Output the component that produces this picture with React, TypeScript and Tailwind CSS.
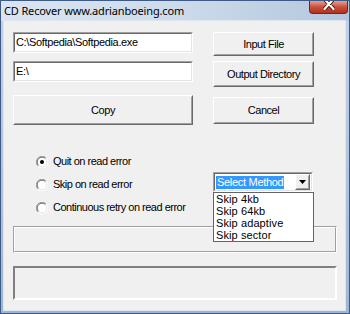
import React from "react";

const font = { fontFamily: '"Liberation Sans", Arial, sans-serif' };

function Raised({ className, children }: { className: string; children?: React.ReactNode }) {
  return (
    <div className={`border border-t-white border-l-white border-b-[#696969] border-r-[#696969] bg-[#f0f0f0] ${className}`}>
      <div className="w-full h-full border border-t-[#f0f0f0] border-l-[#f0f0f0] border-b-[#a0a0a0] border-r-[#a0a0a0] flex items-center justify-center text-[11px] tracking-[-0.45px] text-black">
        {children}
      </div>
    </div>
  );
}

function Sunken({ className, children, inner }: { className: string; children?: React.ReactNode; inner?: string }) {
  return (
    <div className={`border border-t-[#a0a0a0] border-l-[#a0a0a0] border-b-white border-r-white ${className}`}>
      <div className={`w-full h-full border border-t-[#696969] border-l-[#696969] border-b-[#e3e3e3] border-r-[#e3e3e3] ${inner ?? ""}`}>
        {children}
      </div>
    </div>
  );
}

function Radio({ checked }: { checked?: boolean }) {
  return (
    <svg width="12" height="12" viewBox="0 0 12 12" className="shrink-0">
      <circle cx="6" cy="6" r="5.5" fill="white" />
      <path d="M1.9 10.1 A5.5 5.5 0 0 1 10.1 1.9" stroke="#a0a0a0" strokeWidth="1" fill="none" />
      <path d="M10.1 1.9 A5.5 5.5 0 0 1 1.9 10.1" stroke="#ffffff" strokeWidth="1" fill="none" />
      <path d="M2.6 9.4 A4.5 4.5 0 0 1 9.4 2.6" stroke="#696969" strokeWidth="1" fill="none" />
      <path d="M9.4 2.6 A4.5 4.5 0 0 1 2.6 9.4" stroke="#e3e3e3" strokeWidth="1" fill="none" />
      {checked && <circle cx="6" cy="6" r="2" fill="black" />}
    </svg>
  );
}

export default function App() {
  return (
    <div
      className="w-[350px] h-[314px] overflow-hidden flex flex-col border border-[#3d5b86] bg-gradient-to-b from-[#c3d4e8] to-[#9fb6d3]"
      style={font}
    >
      {/* Title bar */}
      <div className="h-[20px] flex items-start justify-between bg-gradient-to-r from-[#dbe5f1] via-[#cddbeb] to-[#b4c7de]">
        <div
          className="pl-[3px] pt-[2px] text-[11px] leading-[15px] text-black"
          style={{ fontFamily: '"Noto Sans", "Open Sans", sans-serif', letterSpacing: "-0.15px" }}
        >
          CD Recover www.adrianboeing.com
        </div>
        <div className="mr-[1px] w-[39px] h-[13px] rounded-b-[4px] border border-t-0 border-[#7a2318] bg-gradient-to-b from-[#e4a093] via-[#c9503c] to-[#b0311f] flex items-start justify-center">
          <svg width="12" height="9" viewBox="0 0 12 9">
            <path d="M1.5 -2 L10.5 8 M10.5 -2 L1.5 8" stroke="#4a120b" strokeWidth="4" strokeLinecap="round" />
            <path d="M1.5 -2 L10.5 8 M10.5 -2 L1.5 8" stroke="#ffffff" strokeWidth="2.2" strokeLinecap="round" />
          </svg>
        </div>
      </div>

      {/* Client area */}
      <div className="ml-[3px] w-[341px] h-[289px] bg-[#f0f0f0] relative flex flex-col outline outline-1 outline-[#dce6f1]">
        {/* Top section */}
        <div className="flex flex-row pl-[9px] pt-[11px]">
          <div className="w-[180px] flex flex-col">
            <Sunken className="h-[21px]" inner="bg-white flex items-center pl-[1px] text-[11px] tracking-[-0.35px] text-black">
              C:\Softpedia\Softpedia.exe
            </Sunken>
            <Sunken className="h-[21px] mt-[8px]" inner="bg-white flex items-center pl-[1px] text-[11px] tracking-[-0.35px] text-black">
              E:\
            </Sunken>
            <Raised className="h-[30px] mt-[13px]">Copy</Raised>
          </div>
          <div className="ml-[20px] w-[101px] flex flex-col">
            <Raised className="h-[24px]">Input File</Raised>
            <Raised className="h-[26px] mt-[5px]">Output Directory</Raised>
            <Raised className="h-[27px] mt-[10px]">Cancel</Raised>
          </div>
        </div>

        {/* Radio + combo section */}
        <div className="flex flex-row mt-[25px]">
          <div className="ml-[32px] w-[177px] flex flex-col">
            {[
              ["Quit on read error", true],
              ["Skip on read error", false],
              ["Continuous retry on read error", false],
            ].map(([label, checked]) => (
              <div key={label as string} className="h-[23px] flex items-center">
                <Radio checked={checked as boolean} />
                <span className="ml-[5px] text-[11px] tracking-[-0.5px] text-black">{label as string}</span>
              </div>
            ))}
          </div>
          <div className="mt-[22px] relative">
            <Sunken className="w-[100px] h-[20px]" inner="bg-white flex items-center pl-[1px] pr-[1px]">
              <div className="flex-1 flex items-center">
                <span className="bg-[#3399ff] text-white text-[11px] leading-[13px] px-[1px] tracking-[-0.3px]">Select Method</span>
              </div>
              <Raised className="w-[15px] h-[16px]">
                <svg width="7" height="4" viewBox="0 0 7 4">
                  <path d="M0 0 H7 L3.5 4 Z" fill="black" />
                </svg>
              </Raised>
            </Sunken>
            <div className="absolute left-0 top-[20px] w-[101px] h-[50px] bg-white border border-[#646464] z-10 flex flex-col pl-[2px] text-[11px] leading-[12px] tracking-[0.1px] text-black">
              <span>Skip 4kb</span>
              <span>Skip 64kb</span>
              <span>Skip adaptive</span>
              <span>Skip sector</span>
            </div>
          </div>
        </div>

        {/* Group box (etched) */}
        <div className="ml-[9px] mt-[7px] w-[324px] h-[27px] border border-t-[#a0a0a0] border-l-[#a0a0a0] border-b-white border-r-white">
          <div className="w-full h-full border border-t-white border-l-white border-b-[#a0a0a0] border-r-[#a0a0a0]" />
        </div>

        {/* Bottom sunken panel */}
        <div className="ml-[9px] mt-[13px] w-[324px] h-[34px] border-2 border-t-[#808080] border-l-[#808080] border-b-white border-r-white bg-[#f0f0f0]" />
      </div>
    </div>
  );
}
